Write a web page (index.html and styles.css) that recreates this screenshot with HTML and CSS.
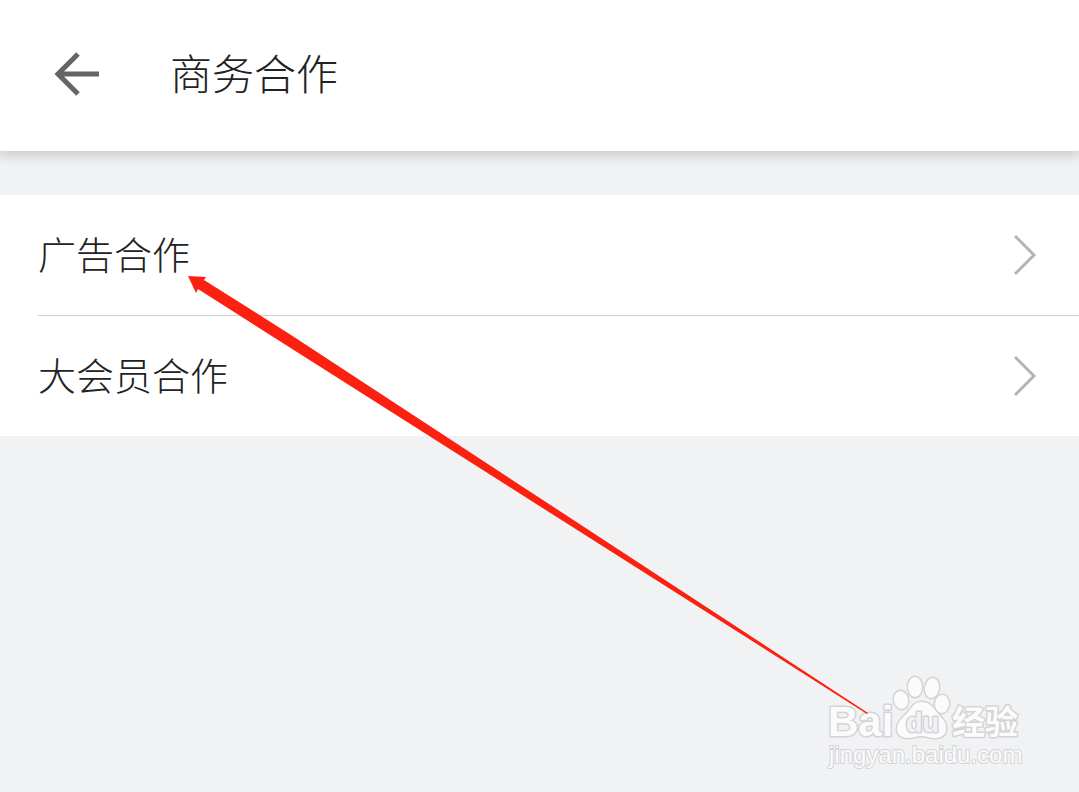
FILE: index.html
```html
<!DOCTYPE html>
<html lang="zh-CN">
<head>
<meta charset="utf-8">
<meta name="viewport" content="width=device-width, initial-scale=1">
<title>商务合作</title>
<link rel="stylesheet" href="styles.css">
</head>
<body>
<header class="topbar">
  <button class="back" type="button" aria-label="返回">
    <svg width="46" height="46" viewBox="0 0 46 46" aria-hidden="true">
      <path d="M45 23H5M24 3L4 23L24 43" fill="none" stroke="#636569" stroke-width="5"/>
    </svg>
  </button>
  <h1 class="title">商务合作</h1>
</header>
<main>
  <ul class="list">
    <li class="item"><a class="link" href="#ads"><span>广告合作</span>
      <svg class="chevron" width="24" height="42" viewBox="0 0 24 42" aria-hidden="true"><path d="M2 2L21 21L2 40"/></svg></a></li>
    <li class="item"><a class="link" href="#vip"><span>大会员合作</span>
      <svg class="chevron" width="24" height="42" viewBox="0 0 24 42" aria-hidden="true"><path d="M2 2L21 21L2 40"/></svg></a></li>
  </ul>
</main>
<svg class="watermark" width="204" height="100" viewBox="0 0 204 100" role="img" aria-label="Baidu 经验">
  <g class="mark">
    <text class="brand" x="4" y="62">Bai</text>
    <ellipse cx="77" cy="26" rx="7" ry="9" transform="rotate(-12 77 26)"/>
    <ellipse cx="91" cy="13" rx="7" ry="10"/>
    <ellipse cx="108" cy="14" rx="7" ry="10" transform="rotate(10 108 14)"/>
    <ellipse cx="118" cy="30" rx="7" ry="9" transform="rotate(8 118 30)"/>
    <path d="M97 28C91 28 88 33 84 38C79 44 73 47 73 55C73 61 78 64 84 64C90 64 92 62 97 62C103 62 105 64 111 64C118 64 123 60 122 53C122 46 115 42 111 36C108 31 104 28 97 28Z"/>
    <text class="du" x="82" y="58">du</text>
    <text class="cn" x="128" y="60">经验</text>
    <text class="url" x="5" y="89">jingyan.baidu.com</text>
  </g>
</svg>
<svg class="pointer" width="690" height="445" viewBox="0 0 690 445" aria-hidden="true">
  <path d="M2 3L20 4L18 7L105 62L682 440L681 441L92 67L12 16L10 20Z" fill="#fc2010"/>
</svg>
</body>
</html>
```
FILE: styles.css
```css
* {
  box-sizing: border-box;
}

body {
  position: relative;
  margin: 0;
  min-height: 100vh;
  background: #f0f2f4;
  color: #222;
  font-family: "Noto Sans CJK SC", sans-serif;
  font-weight: 300;
}

.topbar {
  display: flex;
  align-items: center;
  gap: 70px;
  height: 151px;
  padding: 0 54px 4px;
  background: #fff;
  box-shadow: 0 2px 12px 2px rgba(0, 0, 0, 0.18);
}

.back {
  display: flex;
  padding: 0;
  border: 0;
  background: none;
}

.title {
  margin: 0;
  padding-bottom: 4px;
  font-size: 42px;
  font-weight: 300;
  line-height: 60px;
}

.list {
  margin: 44px 0 0;
  padding: 0 0 0 38px;
  background: #fff;
  list-style: none;
}

.item + .item {
  border-top: 1px solid #d2d2d2;
}

.link {
  display: flex;
  align-items: center;
  justify-content: space-between;
  height: 120px;
  padding-right: 42px;
  color: inherit;
  font-size: 38px;
  line-height: 56px;
  text-decoration: none;
}

.link span {
  padding-bottom: 4px;
}

.chevron {
  fill: none;
  stroke: #b5b5b5;
  stroke-width: 3;
}

.pointer {
  position: absolute;
  top: 273px;
  left: 186px;
  pointer-events: none;
}

.watermark {
  position: absolute;
  right: 51px;
  bottom: 18px;
  pointer-events: none;
}

.mark {
  fill: #fbfbfc;
  stroke: #d3d4d6;
  stroke-width: 3;
  stroke-linejoin: round;
  paint-order: stroke;
}

.brand {
  font: bold 42px "Liberation Sans", sans-serif;
}

.du {
  fill: #f1f2f4;
  font: bold 27px "Liberation Sans", sans-serif;
}

.cn {
  font: bold 33px "Noto Sans CJK SC", sans-serif;
}

.url {
  stroke-width: 2;
  font: 24px "Liberation Sans", sans-serif;
}
```
